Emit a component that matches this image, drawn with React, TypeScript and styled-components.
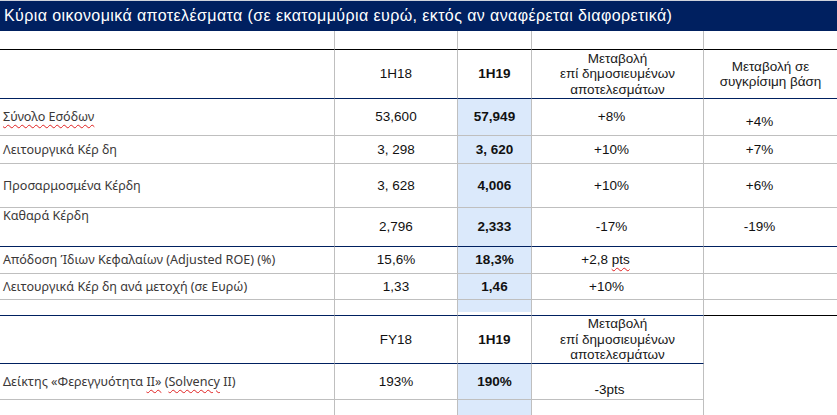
import React from 'react';
import styled, { createGlobalStyle } from 'styled-components';

const NAVY = '#002060';
const GRAY = '#bfbfbf';
const BLUE = '#dbe9fb';

const Global = createGlobalStyle`
  html, body { margin: 0; padding: 0; background: #fff; }
  body { width: 837px; height: 415px; overflow: hidden; }
`;

type Line = 'black' | 'navy' | 'gray' | 'none';
const lineColor: Record<Line, string> = {
  black: '#000',
  navy: NAVY,
  gray: GRAY,
  none: 'transparent',
};

const Page = styled.div`
  width: 837px;
  border-top: 1px solid #cfd3dc;
`;

const Title = styled.div`
  height: 30px;
  background: ${NAVY};
  color: #fff;
  font-family: 'Liberation Sans', Arial, sans-serif;
  font-size: 16px;
  letter-spacing: 0.4px;
  display: flex;
  align-items: center;
  padding-left: 4px;
  white-space: nowrap;
`;

const Table = styled.div`
  display: grid;
  grid-template-columns: 335px 123px 74px 172px 133px;
  grid-template-rows: 19px 49px 37px 28px 44px 39px 27px 26px 16px 48px 36px 16px;
`;

type VAlign = 'top' | 'middle' | 'bottom';
const alignMap: Record<VAlign, string> = { top: 'flex-start', middle: 'center', bottom: 'flex-end' };

const Cell = styled.div<{
  $line: Line;
  $edge?: boolean;
  $blue?: boolean;
  $blueUntil?: number;
  $v?: VAlign;
  $shift?: number;
}>`
  box-sizing: border-box;
  border-bottom: 1px solid ${(p) => lineColor[p.$line]};
  border-right: ${(p) => (p.$edge ? 'none' : `1px solid ${GRAY}`)};
  background: ${(p) =>
    p.$blueUntil
      ? `linear-gradient(${BLUE} 0 ${p.$blueUntil}px, #fff ${p.$blueUntil}px)`
      : p.$blue
      ? BLUE
      : '#fff'};
  display: flex;
  align-items: ${(p) => alignMap[p.$v || 'middle']};
  padding-bottom: ${(p) => (p.$v === 'bottom' ? `${p.$shift ?? 0}px` : '0')};
  padding-top: ${(p) => (p.$v === 'top' ? `${p.$shift ?? 0}px` : '0')};
  white-space: nowrap;
  overflow: hidden;
`;

const LabelCell = styled(Cell)`
  justify-content: flex-start;
  padding-left: 3px;
  font-family: 'Noto Sans', 'Open Sans', sans-serif;
  font-size: 12.6px;
  line-height: 16px;
  color: #3b3838;
`;

const NumCell = styled(Cell)<{ $bold?: boolean; $offset?: number }>`
  justify-content: center;
  padding-right: ${(p) => p.$offset ?? 0}px;
  font-family: 'Liberation Sans', Arial, sans-serif;
  font-size: 13.5px;
  line-height: 16px;
  font-weight: ${(p) => (p.$bold ? 700 : 400)};
  color: #111;
`;

const HeadCell = styled(Cell)`
  justify-content: center;
  text-align: center;
  font-family: 'Liberation Sans', Arial, sans-serif;
  font-size: 13.5px;
  line-height: 15.5px;
  color: #1a1a1a;
  white-space: normal;
`;

const Spell = styled.span`
  text-decoration: underline wavy #e02020;
  text-decoration-thickness: 1px;
  text-underline-offset: 3px;
`;

const Label = styled.span``;

export default function App() {
  return (
    <Page>
      <Global />
      <Title>Κύρια οικονομικά αποτελέσματα (σε εκατομμύρια ευρώ, εκτός αν αναφέρεται διαφορετικά)</Title>
      <Table>
        {/* Row A: blank */}
        <Cell $line="black" />
        <Cell $line="black" />
        <Cell $line="black" />
        <Cell $line="black" />
        <Cell $line="black" $edge />

        {/* Row B: header */}
        <Cell $line="navy" />
        <NumCell $line="navy">1H18</NumCell>
        <NumCell $line="navy" $bold>1H19</NumCell>
        <HeadCell $line="navy">
          Μεταβολή
          <br />
          επί δημοσιευμένων
          <br />
          αποτελεσμάτων
        </HeadCell>
        <HeadCell $line="navy" $edge>
          Μεταβολή σε
          <br />
          συγκρίσιμη βάση
        </HeadCell>

        {/* Row C */}
        <LabelCell $line="gray">
          <Spell>Σύνολο Εσόδων</Spell>
        </LabelCell>
        <NumCell $line="gray">53,600</NumCell>
        <NumCell $line="gray" $blue $bold>57,949</NumCell>
        <NumCell $line="gray" $offset={12}>+8%</NumCell>
        <NumCell $line="gray" $edge $offset={22} $v="bottom" $shift={5}>+4%</NumCell>

        {/* Row D */}
        <LabelCell $line="gray">
          <Label>Λειτουργικά Κέρ δη</Label>
        </LabelCell>
        <NumCell $line="gray">3, 298</NumCell>
        <NumCell $line="gray" $blue $bold>3, 620</NumCell>
        <NumCell $line="gray" $offset={12}>+10%</NumCell>
        <NumCell $line="gray" $edge $offset={22}>+7%</NumCell>

        {/* Row E */}
        <LabelCell $line="gray">
          <Label>Προσαρμοσμένα Κέρδη</Label>
        </LabelCell>
        <NumCell $line="gray">3, 628</NumCell>
        <NumCell $line="gray" $blue $bold>4,006</NumCell>
        <NumCell $line="gray" $offset={12}>+10%</NumCell>
        <NumCell $line="gray" $edge $offset={22}>+6%</NumCell>

        {/* Row F */}
        <LabelCell $line="navy" $v="top" $shift={0}>
          <Label>Καθαρά Κέρδη</Label>
        </LabelCell>
        <NumCell $line="navy">2,796</NumCell>
        <NumCell $line="navy" $blue $bold>2,333</NumCell>
        <NumCell $line="navy" $offset={12}>-17%</NumCell>
        <NumCell $line="navy" $edge $offset={22}>-19%</NumCell>

        {/* Row G */}
        <LabelCell $line="gray">
          <Label>Απόδοση Ίδιων Κεφαλαίων (Adjusted ROE) (%)</Label>
        </LabelCell>
        <NumCell $line="gray">15,6%</NumCell>
        <NumCell $line="gray" $blue $bold>18,3%</NumCell>
        <NumCell $line="gray" $offset={24}>
          +2,8&nbsp;<Spell>pts</Spell>
        </NumCell>
        <Cell $line="gray" $edge />

        {/* Row H */}
        <LabelCell $line="gray">
          <Label>Λειτουργικά Κέρ δη ανά μετοχή (σε Ευρώ)</Label>
        </LabelCell>
        <NumCell $line="gray">1,33</NumCell>
        <NumCell $line="gray" $blue $bold>1,46</NumCell>
        <NumCell $line="gray" $offset={22}>+10%</NumCell>
        <Cell $line="gray" $edge />

        {/* Row I: blank */}
        <Cell $line="navy" />
        <Cell $line="navy" />
        <Cell $line="navy" $blueUntil={12} />
        <Cell $line="navy" />
        <Cell $line="black" $edge />

        {/* Row J: second header */}
        <Cell $line="navy" />
        <NumCell $line="navy">FY18</NumCell>
        <NumCell $line="navy" $bold>1H19</NumCell>
        <HeadCell $line="navy">
          Μεταβολή
          <br />
          επί δημοσιευμένων
          <br />
          αποτελεσμάτων
        </HeadCell>
        <Cell $line="none" $edge />

        {/* Row K */}
        <LabelCell $line="gray">
          <Label>
            Δείκτης «Φερεγγυότητα <Spell>II»</Spell> (<Spell>Solvency</Spell> II)
          </Label>
        </LabelCell>
        <NumCell $line="gray">193%</NumCell>
        <NumCell $line="gray" $blue $bold>190%</NumCell>
        <NumCell $line="gray" $offset={16} $v="bottom" $shift={1}>-3pts</NumCell>
        <Cell $line="none" $edge />

        {/* Row L: blank */}
        <Cell $line="none" />
        <Cell $line="none" />
        <Cell $line="none" $blue />
        <Cell $line="none" />
        <Cell $line="none" $edge />
      </Table>
    </Page>
  );
}
